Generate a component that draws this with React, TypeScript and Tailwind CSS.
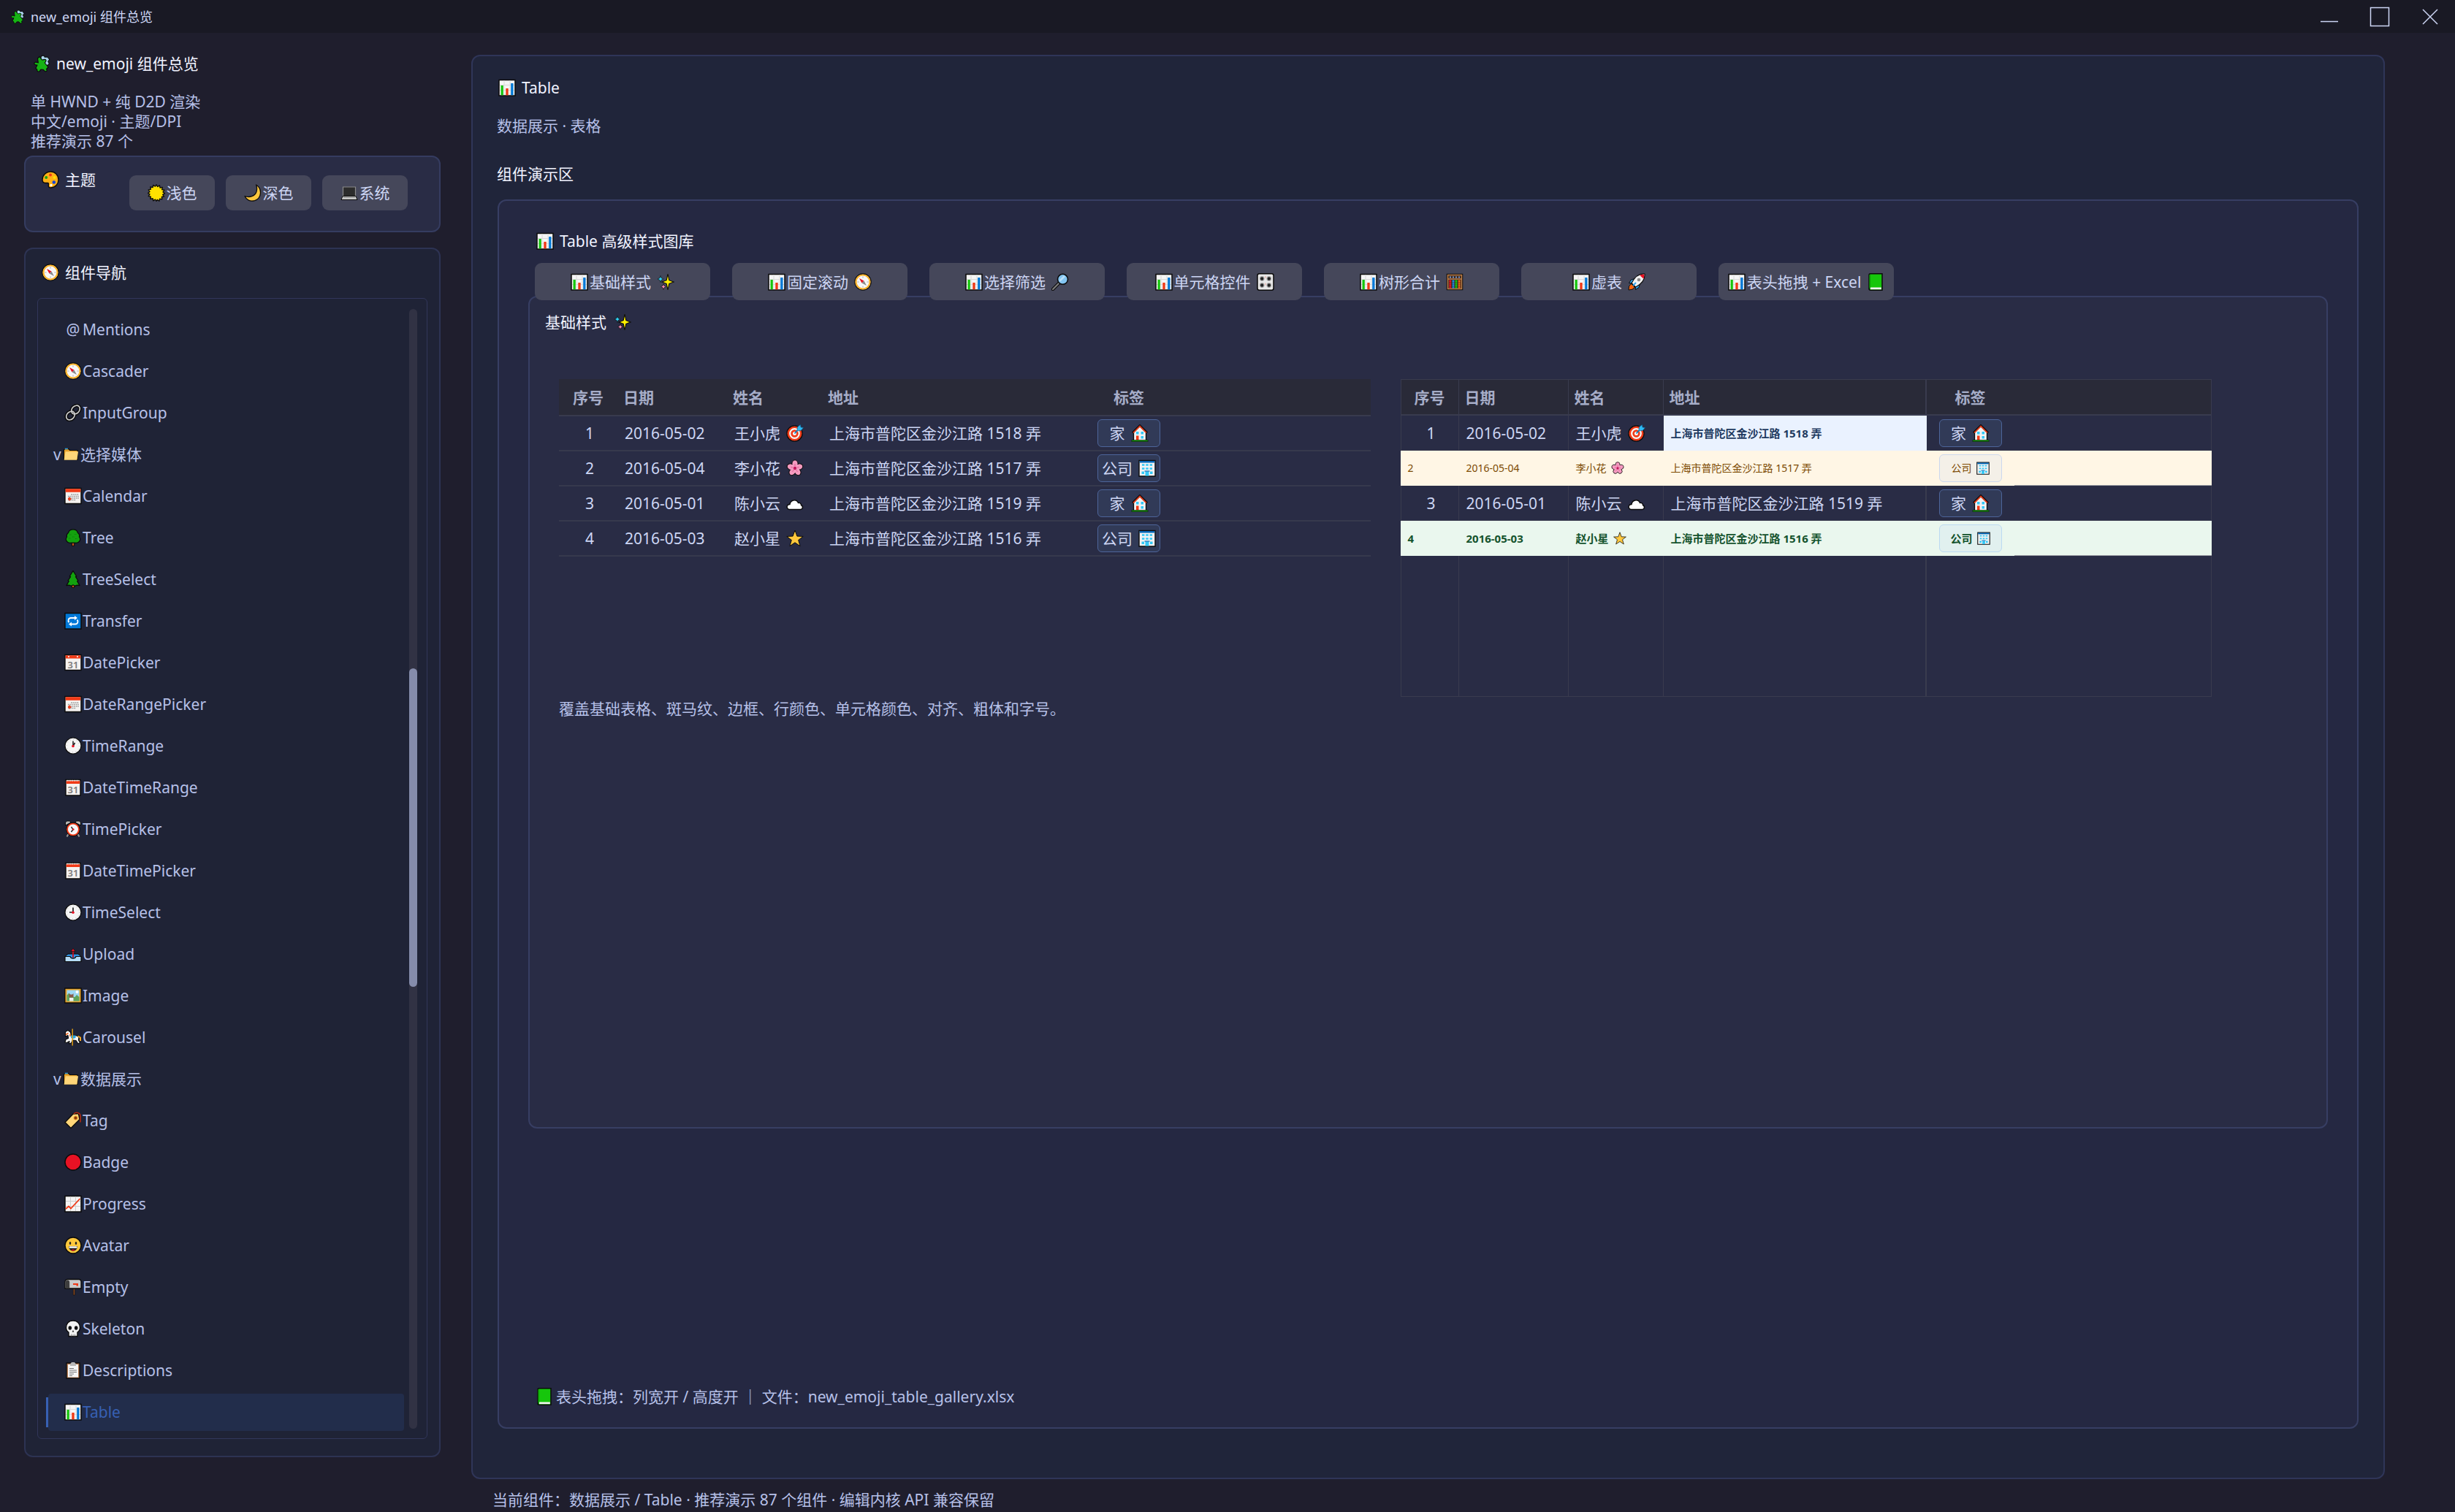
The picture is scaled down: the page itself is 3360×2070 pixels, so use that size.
import type { ReactNode } from "react";
import clsx from "clsx";

type IconName = keyof typeof glyphs;

const clockFace = (
	<>
		<circle cx="12" cy="12" r="11" fill="#f5f5f5" stroke="#0b0b0b" strokeWidth="1.2" />
		<circle cx="12" cy="12" r="8.6" fill="none" stroke="#b9b9b9" strokeWidth="1" strokeDasharray="1 3.5" />
	</>
);

const glyphs = {
	puzzle: (
		<>
			<path d="M11 3.500c0-3 5-3.300 5.200-.4L20 3l2.800 3.500-2 2.500 1.700 3.500-3.500 2.500-4-2-4-5z" fill="#a9d3ea" stroke="#0b0b0b" strokeWidth="1.200" strokeLinejoin="round" />
			<path d="M6.500 5 9 2.500l3.500 4.500c2 .2 3.300-1.400 4.800-.4 1.500 1.300.2 3.400-1 4.400l4.700 6-2.500 2.700c2 2-.7 4.200-2.500 2.400l-1.700-1.800c-2 0-3.500-.6-4.300.8-.3 3-5 2.300-4.200-.8l-2-1.800L6 14C2 14.500.6 11.500 3 10.200c1.500-.6 2.800.4 4.300.6z" fill="#16b314" stroke="#0b0b0b" strokeWidth="1.200" strokeLinejoin="round" />
		</>
	),
	palette: (
		<>
			<path d="M12.500 1C6 1 1 6 1 12c0 3 1.500 4.500 4 4.500h3c1.800 0 1.600 1.500 1.300 3-.4 2.300 1.200 3.700 3.500 3.500C19 22.500 23 18 23 12S18.500 1 12.500 1z" fill="#ffb016" stroke="#0b0b0b" strokeWidth="1.400" />
			<circle cx="12" cy="5.500" r="2" fill="#f03a17" />
			<circle cx="6.200" cy="9" r="2" fill="#16a314" />
			<circle cx="17.600" cy="9" r="2" fill="#ffe100" />
			<circle cx="16.800" cy="15.500" r="2.300" fill="#1446d8" />
			<circle cx="13" cy="19.500" r="1.700" fill="#fff" />
		</>
	),
	sun: (
		<path d="m12 .8 1.700 2.800 2.700-1.800.6 3.200 3.300-.6-.6 3.200 3.200.6-1.900 2.700 2.600 1.900-2.900 1.500 1.800 2.700-3.200.5.5 3.300-3.200-.7-.7 3.200-2.700-1.900L12 23.500l-1.600-2.500-2.700 1.900-.6-3.200-3.200.7.4-3.300-3.100-.5 1.800-2.700L.4 12.400 3 10.500 1.200 7.800l3.200-.6-.6-3.200 3.300.6.600-3.200 2.700 1.800z" fill="#ffe100" stroke="#0b0b0b" strokeWidth="1.300" strokeLinejoin="round" />
	),
	moon: (
		<path d="M16.500 1c8.500 5 8 18.500-2 21.600C8.500 24.300 3 21.500 1 16.500c7 2.500 14 0 16-6 1-3.500.8-6.500-.5-9.500z" fill="#ffc83d" stroke="#0b0b0b" strokeWidth="1.300" strokeLinejoin="round" />
	),
	laptop: (
		<>
			<path d="M3.500 4h17v12.500h-17z" fill="#2c2c2c" stroke="#8a8a8a" strokeWidth="1.200" />
			<path d="M3 16.500h18l2 5H1z" fill="#c9c9c9" stroke="#0b0b0b" />
			<path d="M4 18.300h16" stroke="#8a8a8a" />
		</>
	),
	compass: (
		<>
			<circle cx="12" cy="12" r="11" fill="#fff" stroke="#0b0b0b" strokeWidth="1.400" />
			<circle cx="12" cy="12" r="9.500" fill="#f7f7f7" stroke="#ffb52e" strokeWidth="2.200" />
			<path d="M12 4.500v2M12 17.500v2M4.500 12h2M17.500 12h2" stroke="#aaa" />
			<path d="m7 7 6.500 3.500-3 3z" fill="#e81224" />
			<path d="m17 17-6.500-3.500 3-3z" fill="#8a8a8a" />
		</>
	),
	link: (
		<>
			<g fill="none" stroke="#0b0b0b" strokeWidth="4.600">
				<ellipse cx="15.500" cy="8" rx="5" ry="6.500" transform="rotate(45 15.500 8)" />
				<ellipse cx="8.500" cy="16" rx="5" ry="6.500" transform="rotate(45 8.500 16)" />
			</g>
			<g fill="none" stroke="#ccc" strokeWidth="1.700">
				<ellipse cx="15.500" cy="8" rx="5" ry="6.500" transform="rotate(45 15.500 8)" />
				<ellipse cx="8.500" cy="16" rx="5" ry="6.500" transform="rotate(45 8.500 16)" />
			</g>
		</>
	),
	folder: (
		<>
			<path d="M1.500 5.500 3 4h5.500l2 2H22v14H1.500z" fill="#e5a12b" stroke="#0b0b0b" strokeWidth="1.300" />
			<path d="M3 3.700h4.500" stroke="#2ea0e0" strokeWidth="1.500" />
			<path d="M4 8h19l-2 12.500H1.800z" fill="#ffd679" />
		</>
	),
	calendar: (
		<>
			<path d="M1 1.500h22v21H1z" fill="#f5f2f0" stroke="#0b0b0b" strokeWidth="1.400" />
			<path d="M1.700 2.200h20.600v4.600H1.700z" fill="#f03a17" />
			<path d="M9 10h11M5 12.500h15M5 15h15M5 17.500h11" stroke="#a5a5a5" strokeWidth="1.500" strokeDasharray="2 .7" />
			<path d="M5 16h4.500M7.200 13.500v5" stroke="#f03a17" strokeWidth="1.800" />
		</>
	),
	date: (
		<>
			<path d="M1 1.500h22v21H1z" fill="#f5f2f0" stroke="#0b0b0b" strokeWidth="1.400" />
			<path d="M1.700 2.200h20.600v4.300H1.700z" fill="#f03a17" />
			<circle cx="6" cy="4" r="1" fill="#fff" />
			<circle cx="18" cy="4" r="1" fill="#fff" />
			<text x="12" y="19.500" textAnchor="middle" fontSize="13" fontWeight="600" fill="#7a7a7a">31</text>
		</>
	),
	spiral: (
		<>
			<path d="M2 1.500h20v21.500H2z" fill="#f5f2f0" stroke="#0b0b0b" strokeWidth="1.400" />
			<path d="M2.700 3h18.600v4H2.700z" fill="#f03a17" />
			<path d="M3.500 2.800h17" stroke="#f5f2f0" strokeWidth="2" strokeDasharray="1.200 1.200" />
			<text x="12" y="19.500" textAnchor="middle" fontSize="13" fontWeight="600" fill="#7a7a7a">31</text>
		</>
	),
	tree: (
		<>
			<path d="M10.300 18h3.400v5.300h-3.400z" fill="#c4501b" stroke="#0b0b0b" />
			<path d="M12 .8c3.500 0 5.800 1.700 6.500 4.700 2 1.500 2.600 3.500 2 5.500 1.700 2.500 1.300 5.500-.8 7-1.500 1.300-3.700 1.500-5.700 1.200h-4c-2 .3-4.200.1-5.700-1.200-2.100-1.500-2.500-4.500-.8-7-.6-2 0-4 2-5.500C6.200 2.500 8.500.8 12 .8z" fill="#13a10e" stroke="#0b0b0b" strokeWidth="1.300" />
			<path d="M7 8h3M14 7.500h3M6 13h3M11 11h3M15 13.500h3" stroke="#0c7a0a" strokeDasharray="1.500 1" />
		</>
	),
	pine: (
		<>
			<path d="M10.300 18.500h3.400v5h-3.400z" fill="#c4501b" stroke="#0b0b0b" />
			<path d="m12 .5 4.700 7.500-1.200.6 3.500 5.400-1.300.6 3.300 5.900-3.500-.3-3 1-2.500-1.400-2.500 1.400-3-1-3.500.3 3.300-5.900-1.300-.6L8.500 8.600 7.300 8z" fill="#13a10e" stroke="#0b0b0b" strokeWidth="1.300" strokeLinejoin="round" />
		</>
	),
	repeat: (
		<>
			<path d="M1 1.500h22v21.500H1z" fill="#0078d7" stroke="#0b0b0b" strokeWidth="1.400" />
			<g fill="none" stroke="#fff" strokeWidth="1.800">
				<path d="M15 8H9c-3.500 0-4.500 4-2.500 6M9 16.500h6c3.500 0 4.500-4 2.500-6" />
			</g>
			<path d="m14 5 4 3-4 3zM10 13.500l-4 3 4 3z" fill="#fff" />
		</>
	),
	clock1: (
		<>
			{clockFace}
			<path d="M12 12V5.500" stroke="#222" strokeWidth="1.500" />
			<path d="m12 12 2.500-4" stroke="#222" strokeWidth="1.800" />
			<circle cx="12" cy="12.500" r="1.800" fill="#e81224" />
		</>
	),
	clock9: (
		<>
			{clockFace}
			<path d="M12 12V5.500M12 12H7" stroke="#222" strokeWidth="1.700" />
			<circle cx="12" cy="12.300" r="1.800" fill="#e81224" />
		</>
	),
	alarm: (
		<>
			<path d="M1.500 7V3l2-2h4l1.500 2zM22.500 7V3l-2-2h-4L15 3z" fill="#b8b8b8" stroke="#0b0b0b" />
			<path d="m5.500 19-2 3.500M18.500 19l2 3.500" stroke="#999" strokeWidth="2" />
			<circle cx="12" cy="12.500" r="9.300" fill="#f03a17" stroke="#0b0b0b" />
			<circle cx="12" cy="12.500" r="7" fill="#f7f7f7" />
			<path d="m9.500 9 2.500 3.500-2.500 3.500" fill="none" stroke="#222" strokeWidth="1.400" />
			<circle cx="12.300" cy="12.500" r="1.300" fill="#e81224" />
		</>
	),
	upload: (
		<>
			<path d="M1 15.500 5 12h14l4 3.500-2 3H3z" fill="#2f8fe0" stroke="#0b0b0b" />
			<path d="M1 15.500h7c1 3.500 7 3.500 8 0h7V22.500H1z" fill="#b5dcf7" stroke="#0b0b0b" strokeWidth="1.200" />
			<path d="M12 6v11" stroke="#c50f1f" strokeWidth="1.800" />
			<path d="m12 4.500 3 4H9z" fill="#e81224" stroke="#0b0b0b" strokeWidth=".6" />
		</>
	),
	frame: (
		<>
			<path d="M.800 2h22.400v20H.8z" fill="#e5a12b" stroke="#0b0b0b" strokeWidth="1.300" />
			<path d="M3.500 4.500h17v15h-17z" fill="#9fd8f5" />
			<path d="M3.500 19.500v-8l3-3 4 5 4 .5 2.500-3 3.500 3v5.500z" fill="#5fa45b" />
			<path d="m6.500 9 1.500 1.500h3L12.500 9v5.500h-6z" fill="#8c5a4a" />
			<path d="M7 15h5.500v4.500H7z" fill="#f1efee" />
			<circle cx="17.500" cy="7" r="2" fill="#fff" />
		</>
	),
	carousel: (
		<>
			<path d="M1.500 4.500 5 2.500 8.500 5l1 4.500 8 .5 2.500 2-.5 4 2 3.500-2.500 1.500-3-4.500-4.500-.5-2 4-3 1 .5-3.500-3.500 2-2.500-.5 1-4 3.500-1.500-.5-4L1.500 11z" fill="#f5f5f5" stroke="#0b0b0b" strokeWidth="1.200" strokeLinejoin="round" />
			<path d="M9 9.500h6.500v3.500L12 14l-3-1z" fill="#26a6e8" />
			<path d="m2 8.500 3.500-2M8 8v3" stroke="#f0641f" strokeWidth="1.600" />
			<path d="m18.500 10.500 3.500 2v4.500" fill="none" stroke="#f5a623" strokeWidth="2" />
			<path d="M11.200.5v23" stroke="#dc9a12" strokeWidth="1.500" />
		</>
	),
	tag: (
		<>
			<path d="M1 14.500 12 3l7.500-.5 1.500 8L9 22.500z" fill="#ffd679" stroke="#0b0b0b" strokeWidth="1.400" strokeLinejoin="round" />
			<circle cx="15.500" cy="8.500" r="2.500" fill="#8a3a12" stroke="#f0a020" />
			<path d="M13 3c3-3 9-2 9 3v8.500" fill="none" stroke="#b5290f" strokeWidth="1.600" />
		</>
	),
	red: <circle cx="12" cy="12" r="11" fill="#e81224" stroke="#0b0b0b" strokeWidth="1.500" />,
	trend: (
		<>
			<path d="M1 1.500h22v21.500H1z" fill="#f5f5f5" stroke="#0b0b0b" strokeWidth="1.500" />
			<path d="M8.500 2v20M15.500 2v20M2 8.500h20M2 15.500h20" stroke="#cfcfcf" />
			<path d="m2 19 4-3.500 3 3L21.500 5" fill="none" stroke="#f03a17" strokeWidth="1.800" />
		</>
	),
	grin: (
		<>
			<circle cx="12" cy="12" r="11" fill="#ffc83d" stroke="#0b0b0b" strokeWidth="1.400" />
			<ellipse cx="8" cy="9" rx="1.300" ry="2" fill="#222" />
			<ellipse cx="16" cy="9" rx="1.300" ry="2" fill="#222" />
			<path d="M6 13h12c0 9-12 9-12 0z" fill="#222" />
			<path d="M6.500 13.300h11v2.400h-11z" fill="#fff" />
			<path d="M9.500 18.500c1.500-1.200 3.500-1.200 5 0-1.500 1.200-3.500 1.200-5 0z" fill="#e81224" />
		</>
	),
	mailbox: (
		<>
			<path d="M12.300 13h2.200v10h-2.200z" fill="#8a4a20" stroke="#0b0b0b" strokeWidth=".6" />
			<path d="M4.500 1.500H20c2 0 3 1.500 3 3.500v9H1V5c0-2 1.500-3.500 3.500-3.500z" fill="#cacaca" stroke="#0b0b0b" strokeWidth="1.300" />
			<path d="M1.700 13.300V5c0-3.500 5.500-3.500 5.500 0v8.300z" fill="#3d3d3d" />
			<path d="M12 7h7v3.500h-2.500V9H12z" fill="#f03a17" />
		</>
	),
	skull: (
		<>
			<path d="M12 1c6 0 9.500 4 9.500 9.500 0 3-1 5-3.500 6.500v5.500H6V17c-2.500-1.500-3.500-3.500-3.500-6.500C2.500 5 6 1 12 1z" fill="#f2f2f2" stroke="#0b0b0b" strokeWidth="1.400" />
			<ellipse cx="7.800" cy="11" rx="2.300" ry="2.800" fill="#111" />
			<ellipse cx="16.200" cy="11" rx="2.300" ry="2.800" fill="#111" />
			<path d="m12 14 1.300 2.600h-2.600z" fill="#111" />
			<path d="M9.500 19.500v3M12 19.500v3M14.500 19.500v3" stroke="#777" strokeWidth=".8" />
		</>
	),
	clipboard: (
		<>
			<path d="M3 2h18v21H3z" fill="#b47b55" stroke="#0b0b0b" strokeWidth="1.300" />
			<path d="M5 4h14v17.500H5z" fill="#f5f5f5" />
			<path d="M8 3.500 10 1h4l2 2.500V6H8z" fill="#b8b8b8" />
			<path d="M7 9.500h6M7 12h10M7 14.500h10M7 17h6M7 19.300h4" stroke="#777" />
		</>
	),
	chart: (
		<>
			<path d="M1 1.500h22v21.500H1z" fill="#f5f5f5" stroke="#0b0b0b" strokeWidth="1.500" />
			<path d="M8 2v20M16 2v20M2 8.500h20M2 15.500h20" stroke="#dadada" />
			<path d="M3.500 9h3.300v13.300H3.500z" fill="#16c60c" />
			<path d="M10.300 13h3.400v9.300h-3.400z" fill="#f03a17" />
			<path d="M17.200 6h3.300v16.300h-3.300z" fill="#0078d7" />
		</>
	),
	sparkles: (
		<>
			<path d="m15 1 1.800 8.700L23 12l-6.200 2.300L15 23l-1.800-8.700L7 12l6.200-2.300z" fill="#fff100" stroke="#0b0b0b" strokeWidth="1.100" />
			<path d="m5 3.500 1 3 3 1.500-3 1.500-1 3-1-3L1 8l3-1.500z" fill="#31d2f7" stroke="#0b0b0b" strokeWidth=".7" />
			<path d="m9 14.500 1 2.700 2.500 1.300-2.500 1.300L9 22.500l-1-2.700-2.500-1.300L8 17.200z" fill="#f38ab5" stroke="#0b0b0b" strokeWidth=".7" />
		</>
	),
	search: (
		<>
			<path d="m10 14-8 8" stroke="#0b0b0b" strokeWidth="4.500" strokeLinecap="round" />
			<path d="m10 14-8 8" stroke="#7e7e7e" strokeWidth="2.200" strokeLinecap="round" />
			<circle cx="15.500" cy="8.300" r="7" fill="#83c5f2" stroke="#0b0b0b" strokeWidth="1.600" />
			<path d="M11.500 10.500 18 4" stroke="#b9e0fa" strokeWidth="2.500" />
		</>
	),
	knobs: (
		<>
			<rect x="1" y=".8" width="22" height="22.400" rx="2.500" fill="#e9e9e9" stroke="#0b0b0b" strokeWidth="1.500" />
			<g fill="#222" stroke="#aaa" strokeWidth="1.200">
				<circle cx="7.200" cy="7.500" r="2.800" />
				<circle cx="16.800" cy="7.500" r="2.800" />
				<circle cx="7.200" cy="16.500" r="2.800" />
				<circle cx="16.800" cy="16.500" r="2.800" />
			</g>
			<path d="M12 4v3M12 13.500v3" stroke="#e9a59a" />
		</>
	),
	abacus: (
		<>
			<path d="M1.500 1.500h21v21h-21z" fill="#3a2a20" stroke="#0b0b0b" strokeWidth="1.500" />
			<path d="M2.500 2.500h19v19h-19zM3 8h18" fill="none" stroke="#c07f47" strokeWidth="1.500" />
			<g strokeWidth="2.800" strokeDasharray="2.400 .5">
				<path d="M5.800 9.500v11" stroke="#e81224" />
				<path d="M10 9.500v11" stroke="#1e88e5" />
				<path d="M14 9.500v11" stroke="#16c60c" />
				<path d="M18.200 9.500v11" stroke="#f7630c" />
			</g>
			<path d="M5 5.500h14" stroke="#7d9ad0" strokeWidth="2" strokeDasharray="2 2" />
		</>
	),
	rocket: (
		<>
			<path d="M4.500 14.500 1.500 18 1 23l5-.8 3.500-3z" fill="#f7630c" stroke="#0b0b0b" strokeLinejoin="round" />
			<path d="M9.500 7.500 4.500 9 1.500 13.500l5 .5zM16.500 14.500 15 19.500 10.500 22.500 10 17.500z" fill="#2aa5f0" stroke="#0b0b0b" strokeLinejoin="round" />
			<path d="M23 1c.5 7-3.500 13.500-12.500 18L5 13.500C9.500 4.500 16 .5 23 1z" fill="#f2f2f2" stroke="#0b0b0b" strokeWidth="1.200" strokeLinejoin="round" />
			<path d="M22.400 1.600c.1 2.300-.2 4.400-1 6.200L16.100 2.800c2-.8 4.100-1.200 6.300-1.200z" fill="#e81224" />
			<circle cx="15" cy="9" r="2.300" fill="#8a8a8a" />
			<path d="m7 17 4-4" stroke="#2aa5f0" strokeWidth="1.800" />
		</>
	),
	book: (
		<>
			<path d="M3 2.500C3 1.500 4 .8 5 .8h16v22.400H5c-1.200 0-2-.8-2-2z" fill="#16c60c" stroke="#0b0b0b" strokeWidth="1.500" />
			<path d="M4 2v18" stroke="#0d8a07" strokeWidth="1.500" />
			<path d="M5 19.500h14.800v2.700H5z" fill="#f2f2f2" />
		</>
	),
	target: (
		<>
			<circle cx="11.500" cy="12.500" r="10.600" fill="#f03a17" stroke="#0b0b0b" strokeWidth="1.200" />
			<circle cx="11.500" cy="12.500" r="6.300" fill="none" stroke="#f7f7f7" strokeWidth="2.200" />
			<circle cx="11.500" cy="12.500" r="2.500" fill="#f7f7f7" />
			<path d="m11.500 12.500 6-7" stroke="#0b7fc0" strokeWidth="1.800" />
			<path d="m15 7.500.5-4 4-3 .5 3.500 3.500.5-3 3.700-4 .8z" fill="#2fb9f3" stroke="#0b5c8a" strokeWidth=".6" />
		</>
	),
	house: (
		<>
			<path d="M3.500 11 12 2.500l8.500 8.500v11.500h-17z" fill="#f2f2f2" stroke="#0b0b0b" strokeWidth="1.300" />
			<path d="m2 11.500 10-10 10 10" fill="none" stroke="#0b0b0b" strokeWidth="2.600" />
			<path d="m3 11.500 9-9 9 9" fill="none" stroke="#f03a17" strokeWidth="1.600" />
			<path d="M7 10h3.500v3.500H7zM13.500 10H17v3.500h-3.500zM13.500 16H17v3.500h-3.500z" fill="#31c8f7" />
			<path d="M7 15.500h3.500v6H7z" fill="#f03a17" />
			<path d="M.800 21.500h22.400V23.500H.8z" fill="#16a30c" stroke="#0b0b0b" strokeWidth=".6" />
		</>
	),
	blossom: (
		<>
			<g fill="#f59ac0" stroke="#0b0b0b" strokeWidth="1">
				<ellipse cx="12" cy="6" rx="4.200" ry="5.200" />
				<ellipse cx="12" cy="6" rx="4.200" ry="5.200" transform="rotate(72 12 12)" />
				<ellipse cx="12" cy="6" rx="4.200" ry="5.200" transform="rotate(144 12 12)" />
				<ellipse cx="12" cy="6" rx="4.200" ry="5.200" transform="rotate(216 12 12)" />
				<ellipse cx="12" cy="6" rx="4.200" ry="5.200" transform="rotate(288 12 12)" />
			</g>
			<circle cx="12" cy="12" r="6.500" fill="#f59ac0" />
			<circle cx="12" cy="12" r="2.200" fill="#c2185b" />
			<path d="M12 6v3M17.500 10.300l-2.500 1M15.500 16.800l-1.700-2.300M8.500 16.800l1.700-2.300M6.500 10.300l2.500 1" stroke="#d84a86" strokeWidth=".8" />
		</>
	),
	cloud: (
		<path d="M4.500 20.500c-4.500-.5-4.500-7 .5-7 .5-5.500 8.500-8.500 11.500-2 3-.5 4 1.500 4 3 3 1.500 2.500 5.700-1 6z" fill="#fff" stroke="#0b0b0b" strokeWidth="1.400" />
	),
	star: (
		<path d="m12 1 2.900 8.100 8.300.3-6.500 5 2.400 8.200-7.100-4.800-7.100 4.800 2.400-8.200-6.500-5 8.300-.3z" fill="#ffc83d" stroke="#0b0b0b" strokeWidth="1" strokeLinejoin="round" />
	),
	office: (
		<>
			<path d="M1 1.500h22v21.500H1z" fill="#f2f2f2" stroke="#0b0b0b" strokeWidth="1.400" />
			<path d="M1.700 2h20.600v2.500H1.700z" fill="#0067b8" />
			<path d="M5 7.500h14M5 12.500h14" stroke="#31c8f7" strokeWidth="2.600" strokeDasharray="3.400 1.900" />
			<path d="M4.500 16.500H8V20H4.500zM16 16.500h3.500V20H16z" fill="#31c8f7" />
			<path d="M9.500 16.500h5v6h-5z" fill="#31c8f7" />
			<path d="M8.500 16h7" stroke="#0067b8" strokeWidth="1.200" />
		</>
	),
};

function Icon({ name, className = "size-6" }: { name: IconName; className?: string }) {
	return (
		<svg viewBox="0 0 24 24" aria-hidden="true" className={clsx("shrink-0", className)}>
			{glyphs[name]}
		</svg>
	);
}

type NavEntry = { label: string; icon?: IconName; group?: boolean };

const navEntries: NavEntry[] = [
	{ label: "Mentions" },
	{ label: "Cascader", icon: "compass" },
	{ label: "InputGroup", icon: "link" },
	{ label: "选择媒体", icon: "folder", group: true },
	{ label: "Calendar", icon: "calendar" },
	{ label: "Tree", icon: "tree" },
	{ label: "TreeSelect", icon: "pine" },
	{ label: "Transfer", icon: "repeat" },
	{ label: "DatePicker", icon: "date" },
	{ label: "DateRangePicker", icon: "calendar" },
	{ label: "TimeRange", icon: "clock1" },
	{ label: "DateTimeRange", icon: "spiral" },
	{ label: "TimePicker", icon: "alarm" },
	{ label: "DateTimePicker", icon: "spiral" },
	{ label: "TimeSelect", icon: "clock9" },
	{ label: "Upload", icon: "upload" },
	{ label: "Image", icon: "frame" },
	{ label: "Carousel", icon: "carousel" },
	{ label: "数据展示", icon: "folder", group: true },
	{ label: "Tag", icon: "tag" },
	{ label: "Badge", icon: "red" },
	{ label: "Progress", icon: "trend" },
	{ label: "Avatar", icon: "grin" },
	{ label: "Empty", icon: "mailbox" },
	{ label: "Skeleton", icon: "skull" },
	{ label: "Descriptions", icon: "clipboard" },
	{ label: "Table", icon: "chart" },
];

const themes: { label: string; icon: IconName }[] = [
	{ label: "浅色", icon: "sun" },
	{ label: "深色", icon: "moon" },
	{ label: "系统", icon: "laptop" },
];

const tabs: { label: string; icon: IconName }[] = [
	{ label: "基础样式", icon: "sparkles" },
	{ label: "固定滚动", icon: "compass" },
	{ label: "选择筛选", icon: "search" },
	{ label: "单元格控件", icon: "knobs" },
	{ label: "树形合计", icon: "abacus" },
	{ label: "虚表", icon: "rocket" },
	{ label: "表头拖拽 + Excel", icon: "book" },
];

type Row = {
	id: number;
	date: string;
	name: string;
	icon: IconName;
	address: string;
	tag: string;
	tagIcon: IconName;
};

const rows: Row[] = [
	{ id: 1, date: "2016-05-02", name: "王小虎", icon: "target", address: "上海市普陀区金沙江路 1518 弄", tag: "家", tagIcon: "house" },
	{ id: 2, date: "2016-05-04", name: "李小花", icon: "blossom", address: "上海市普陀区金沙江路 1517 弄", tag: "公司", tagIcon: "office" },
	{ id: 3, date: "2016-05-01", name: "陈小云", icon: "cloud", address: "上海市普陀区金沙江路 1519 弄", tag: "家", tagIcon: "house" },
	{ id: 4, date: "2016-05-03", name: "赵小星", icon: "star", address: "上海市普陀区金沙江路 1516 弄", tag: "公司", tagIcon: "office" },
];

function Heading({ icon, children }: { icon: IconName; children: ReactNode }) {
	return (
		<h2 className="flex h-6 items-center gap-2 whitespace-nowrap text-[#f1f3ff]">
			<Icon name={icon} />
			{children}
		</h2>
	);
}

function TitleBar() {
	return (
		<header className="flex h-[45px] items-center justify-between bg-[#191924] pl-[14px]">
			<div className="flex items-center gap-2 text-[18px] text-[#cdd6f4]">
				<Icon name="puzzle" className="size-5" />
				new_emoji 组件总览
			</div>
			<div className="flex text-[#cdd6f4]">
				<button type="button" aria-label="最小化" className="flex h-[45px] w-[69px] items-center justify-center">
					<svg viewBox="0 0 30 30" className="size-[30px]">
						<path d="M3 21.500h24" stroke="currentColor" strokeWidth="1.500" />
					</svg>
				</button>
				<button type="button" aria-label="最大化" className="flex h-[45px] w-[69px] items-center justify-center">
					<svg viewBox="0 0 30 30" className="size-[30px]">
						<path d="M2.500 2.500h25v25h-25z" fill="none" stroke="currentColor" strokeWidth="1.500" />
					</svg>
				</button>
				<button type="button" aria-label="关闭" className="flex h-[45px] w-[69px] items-center justify-center">
					<svg viewBox="0 0 30 30" className="size-[30px]">
						<path d="m5 5 20 20M25 5 5 25" stroke="currentColor" strokeWidth="1.500" />
					</svg>
				</button>
			</div>
		</header>
	);
}

function NavItem({ entry }: { entry: NavEntry }) {
	const active = entry.label === "Table";

	if (entry.group) {
		return (
			<button type="button" aria-expanded="true" className="flex h-[51px] w-full items-center gap-[2px] pb-px pl-[7px] text-left">
				<span className="w-[11px]">v</span>
				<Icon name="folder" className="size-[22px]" />
				<span>{entry.label}</span>
			</button>
		);
	}

	return (
		<a
			href={`#${entry.label}`}
			className={clsx(
				"relative flex h-[51px] items-center gap-px rounded-[4px] pb-px pl-[22px]",
				active && "bg-[#222d4b] text-[#3760b3]"
			)}
		>
			{active && <span className="absolute top-[5px] -left-[3px] h-[41px] w-[3px] bg-[#3760b3]" />}
			{entry.icon ? <Icon name={entry.icon} /> : <span className="w-6 text-center">@</span>}
			{entry.label}
		</a>
	);
}

function Sidebar() {
	return (
		<aside className="flex w-[570px] shrink-0 flex-col">
			<h1 className="flex h-6 items-center gap-2 pl-3 text-[#f1f3ff]">
				<Icon name="puzzle" />
				new_emoji 组件总览
			</h1>
			<p className="mt-[27px] pl-[9px] leading-[27px]">
				单 HWND + 纯 D2D 渲染
				<br />
				中文/emoji · 主题/DPI
				<br />
				推荐演示 87 个
			</p>

			<section className="mt-[6px] flex h-[105px] items-start rounded-[12px] border-2 border-[#353c60] bg-[#292c45] pt-[19px] pl-[22px]">
				<Heading icon="palette">主题</Heading>
				<div className="mt-[6px] ml-[46px] flex gap-[15px]">
					{themes.map((theme) => (
						<button
							key={theme.label}
							type="button"
							className="flex h-12 w-[117px] items-center justify-center gap-[2px] rounded-[9px] bg-[#45475a] text-[#cdd6f4]"
						>
							<Icon name={theme.icon} />
							{theme.label}
						</button>
					))}
				</div>
			</section>

			<section className="mt-[21px] mb-[30px] flex flex-col rounded-[12px] border-2 border-[#2d3353] bg-[#1f2336] px-4 pt-5 pb-[23px]">
				<div className="pl-[6px]">
					<Heading icon="compass">组件导航</Heading>
				</div>
				<nav className="mt-[23px] flex justify-between rounded-[6px] border border-[#31365a] pr-[13px] pl-[14px]">
					<ul className="mt-[17px] mb-[10px] flex w-[487px] flex-col gap-[6px]">
						{navEntries.map((entry) => (
							<li key={entry.label}>
								<NavItem entry={entry} />
							</li>
						))}
					</ul>
					<div className="mt-[14px] mb-[13px] w-[11px] rounded-full bg-[#313244] pt-[492px]">
						<div className="h-[436px] rounded-full bg-[#858cab]" />
					</div>
				</nav>
			</section>
		</aside>
	);
}

function ColumnWidths() {
	return (
		<colgroup>
			<col className="w-[80px]" />
			<col className="w-[150px]" />
			<col className="w-[130px]" />
			<col className="w-[360px]" />
			<col className="w-[120px]" />
			<col />
		</colgroup>
	);
}

function TagCell({ row, tone }: { row: Row; tone: "plain" | "warm" | "green" }) {
	return (
		<span
			className={clsx(
				"mx-auto flex h-[38px] w-[86px] items-center justify-center rounded-[6px] border",
				tone === "plain" && "gap-2 border-[#4d659a] bg-[#313a57]",
				tone === "warm" && "gap-[6px] border-[#ccd8ee] bg-[#f4f0e8]",
				tone === "green" && "gap-[6px] border-[#bcdaf2] bg-[#e1f0ef]"
			)}
		>
			{row.tag}
			<Icon name={row.tagIcon} className={tone === "plain" ? "size-6" : "size-[18px]"} />
		</span>
	);
}

function PlainTable() {
	return (
		<table className="w-full table-fixed border-separate border-spacing-0 text-left text-[#cdd6f4]">
			<ColumnWidths />
			<thead className="bg-[#292a38] text-[#a6adc8]">
				<tr className="[&>th]:h-[51px] [&>th]:border-b-2 [&>th]:border-[#383a4d] [&>th]:pl-2">
					<th className="pr-2 text-center">序号</th>
					<th>日期</th>
					<th>姓名</th>
					<th>地址</th>
					<th className="pr-2 text-center">标签</th>
					<th />
				</tr>
			</thead>
			<tbody>
				{rows.map((row) => (
					<tr key={row.id} className="[&>td]:h-12 [&>td]:border-b-2 [&>td]:border-[#36394d]">
						<td className="pl-1 text-center">{row.id}</td>
						<td className="pl-[10px]">{row.date}</td>
						<td className="pl-[10px]">
							<span className="flex items-center gap-2">
								{row.name}
								<Icon name={row.icon} />
							</span>
						</td>
						<td className="pl-[10px]">{row.address}</td>
						<td>
							<TagCell row={row} tone="plain" />
						</td>
						<td />
					</tr>
				))}
			</tbody>
		</table>
	);
}

function StyledTable() {
	return (
		<table className="h-[435px] w-full table-fixed border-separate border-spacing-0 text-left text-[#cdd6f4]">
			<ColumnWidths />
			<thead className="bg-[#292a38] text-[#a6adc8]">
				<tr className="[&>th]:h-[50px] [&>th]:border-t [&>th]:border-b-2 [&>th]:border-[#393b4e] [&>th]:pl-2">
					<th className="border-x pr-2 text-center">序号</th>
					<th className="border-r">日期</th>
					<th className="border-r">姓名</th>
					<th className="border-r-2">地址</th>
					<th className="pr-2 text-center">标签</th>
					<th className="border-r" />
				</tr>
			</thead>
			<tbody>
				{rows.map((row) => {
					const warm = row.id === 2;
					const green = row.id === 4;
					const banded = warm || green;

					return (
						<tr
							key={row.id}
							className={clsx(
								"[&>td]:h-12",
								!banded && "[&>td]:border-[#393b4e]",
								warm && "bg-[#fff6e5] text-[14px] text-[#7c4a03]",
								green && "bg-[#eaf7ee] text-[15px] font-bold text-[#14532d]"
							)}
						>
							<td className={clsx(banded ? "pl-[10px]" : "border-x border-b pl-1 text-center")}>{row.id}</td>
							<td className={clsx("pl-[10px]", !banded && "border-r border-b")}>{row.date}</td>
							<td className={clsx("pl-[10px]", !banded && "border-b", !banded && row.id !== 1 && "border-r")}>
								<span className={clsx("flex items-center", banded ? "gap-[6px]" : "gap-2")}>
									{row.name}
									<Icon name={row.icon} className={banded ? "size-[18px]" : "size-6"} />
								</span>
							</td>
							<td
								className={clsx(
									"pl-[10px]",
									row.id === 1 && "bg-[#eaf2ff] text-[15px] font-bold text-[#1e3a5f]",
									row.id === 3 && "border-r-2 border-b"
								)}
							>
								{row.address}
							</td>
							<td className={clsx(!banded && "border-b")}>
								<TagCell row={row} tone={warm ? "warm" : green ? "green" : "plain"} />
							</td>
							<td className={clsx(banded ? "border-b border-[#9a9ca3]" : "border-r border-b")} />
						</tr>
					);
				})}
				<tr className="[&>td]:border-b [&>td]:border-[#393b4e]">
					<td className="border-x" />
					<td className="border-r" />
					<td className="border-r" />
					<td className="border-r-2" />
					<td />
					<td className="border-r" />
				</tr>
			</tbody>
		</table>
	);
}

function Gallery() {
	return (
		<section className="mt-[23px] mr-[34px] ml-[34px] flex flex-1 flex-col rounded-[12px] border-2 border-[#373e63] bg-[#252842] pt-[43px] pb-[30px]">
			<div className="pl-[51px]">
				<Heading icon="chart">Table 高级样式图库</Heading>
			</div>

			<div className="relative z-10 mt-[18px] flex gap-[30px] pl-[49px]">
				{tabs.map((tab) => (
					<button
						key={tab.label}
						type="button"
						className="flex h-[51px] w-[240px] items-center justify-center rounded-[9px] bg-[#45475a] text-[#cdd6f4]"
					>
						<Icon name="chart" />
						<span className="pr-2 pl-[2px] whitespace-nowrap">{tab.label}</span>
						<Icon name={tab.icon} />
					</button>
				))}
			</div>

			<div className="-mt-[6px] mr-10 ml-10 min-h-[1140px] rounded-[12px] border-2 border-[#373e63] bg-[#292c45] pt-[22px]">
				<h3 className="flex h-6 items-center gap-[10px] pl-[21px] text-[#f1f3ff]">
					基础样式
					<Icon name="sparkles" />
				</h3>
				<div className="mt-[66px] mr-[157px] ml-10 grid grid-cols-2 items-start gap-[41px]">
					<PlainTable />
					<StyledTable />
				</div>
				<p className="mt-1 ml-10 leading-6">覆盖基础表格、斑马纹、边框、行颜色、单元格颜色、对齐、粗体和字号。</p>
			</div>

			<p className="mt-auto flex h-6 items-center gap-1 pl-[50px]">
				<Icon name="book" />
				表头拖拽：列宽开 / 高度开 ｜ 文件：new_emoji_table_gallery.xlsx
			</p>
		</section>
	);
}

export default function App() {
	return (
		<div className="flex min-h-screen flex-col bg-[#1f1e2d] font-['Noto_Sans','Noto_Sans_CJK_SC',sans-serif] text-[21px] leading-6 text-[#b6c0e8]">
			<TitleBar />
			<div className="flex flex-1 gap-[42px] pt-[30px] pr-24 pl-[33px]">
				<Sidebar />
				<main className="flex min-w-0 flex-1 flex-col rounded-[12px] border-2 border-[#2f3558] bg-[#20253a] pt-[31px] pb-[67px]">
					<div className="pl-[35px]">
						<Heading icon="chart">Table</Heading>
					</div>
					<p className="mt-7 pl-[33px]">数据展示 · 表格</p>
					<h2 className="mt-[42px] pl-[33px] text-[#f1f3ff]">组件演示区</h2>
					<Gallery />
				</main>
			</div>
			<footer className="flex h-[45px] items-center pt-[11px] pl-[674px]">
				当前组件：数据展示 / Table · 推荐演示 87 个组件 · 编辑内核 API 兼容保留
			</footer>
		</div>
	);
}
